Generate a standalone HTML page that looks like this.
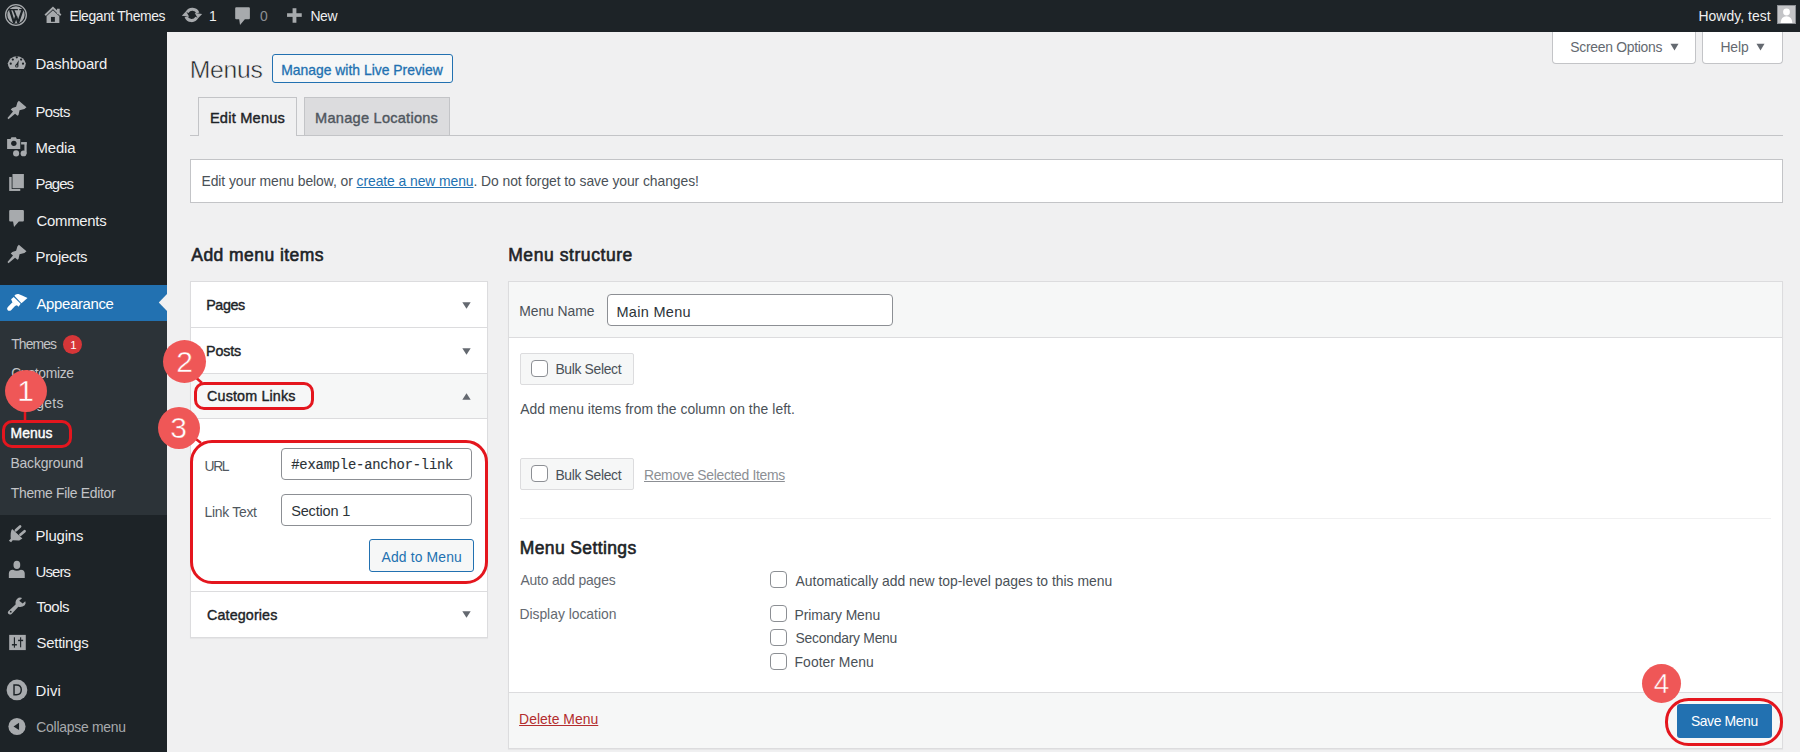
<!DOCTYPE html>
<html><head><meta charset="utf-8"><title>Menus &lsaquo; Elegant Themes &mdash; WordPress</title>
<style>
html,body{margin:0;padding:0;width:1800px;height:752px;overflow:hidden;background:#f0f0f1;font-family:'Liberation Sans',sans-serif}
.r{position:absolute}
.t{position:absolute;line-height:1;white-space:pre}
</style></head><body>
<div class="r" style="left:0px;top:0px;width:1800px;height:32px;background:#1d2327"></div>
<div class="t" style="left:69.50px;top:8px;line-height:16px;font-size:13.9px;color:#f0f0f1;font-family:'Liberation Sans', sans-serif;font-weight:400;letter-spacing:-0.377px;">Elegant Themes</div>
<div class="t" style="left:209.00px;top:8px;line-height:16px;font-size:13.9px;color:#f0f0f1;font-family:'Liberation Sans', sans-serif;font-weight:400;">1</div>
<div class="t" style="left:260.00px;top:8px;line-height:16px;font-size:13.9px;color:#8c8f94;font-family:'Liberation Sans', sans-serif;font-weight:400;">0</div>
<div class="t" style="left:310.50px;top:8px;line-height:16px;font-size:13.9px;color:#f0f0f1;font-family:'Liberation Sans', sans-serif;font-weight:400;letter-spacing:-0.428px;">New</div>
<div class="t" style="left:1698.50px;top:8px;line-height:16px;font-size:13.9px;color:#f0f0f1;font-family:'Liberation Sans', sans-serif;font-weight:400;letter-spacing:0.052px;">Howdy, test</div>
<div class="r" style="left:1777px;top:5px;width:19px;height:19px;background:#c3c4c7;box-sizing:border-box;border:1px solid #8c8f94"></div>
<svg class="r" style="left:1778px;top:6px" width="17" height="17" viewBox="0 0 17 17"><circle cx="8.5" cy="6" r="3.4" fill="#fff"/><path d="M2.6 17 Q3 10.2 8.5 10.2 Q14 10.2 14.4 17 Z" fill="#fff"/></svg>
<div class="r" style="left:0px;top:32px;width:167px;height:720px;background:#1d2327"></div>
<div class="r" style="left:0px;top:285px;width:167px;height:36px;background:#2271b1"></div>
<div class="r" style="left:0px;top:321px;width:167px;height:194px;background:#2c3338"></div>
<svg class="r" style="left:158px;top:294px" width="9" height="17" viewBox="0 0 9 17"><path d="M9 0 L0.8 8.5 L9 17 Z" fill="#f0f0f1"/></svg>
<div class="t" style="left:35.50px;top:56px;line-height:16px;font-size:14.9px;color:#f0f0f1;font-family:'Liberation Sans', sans-serif;font-weight:400;letter-spacing:-0.146px;">Dashboard</div>
<div class="t" style="left:35.50px;top:104px;line-height:16px;font-size:14.9px;color:#f0f0f1;font-family:'Liberation Sans', sans-serif;font-weight:400;letter-spacing:-0.599px;">Posts</div>
<div class="t" style="left:35.50px;top:140px;line-height:16px;font-size:14.9px;color:#f0f0f1;font-family:'Liberation Sans', sans-serif;font-weight:400;letter-spacing:-0.119px;">Media</div>
<div class="t" style="left:35.50px;top:176px;line-height:16px;font-size:14.9px;color:#f0f0f1;font-family:'Liberation Sans', sans-serif;font-weight:400;letter-spacing:-0.944px;">Pages</div>
<div class="t" style="left:36.50px;top:213px;line-height:16px;font-size:14.9px;color:#f0f0f1;font-family:'Liberation Sans', sans-serif;font-weight:400;letter-spacing:-0.263px;">Comments</div>
<div class="t" style="left:35.50px;top:249px;line-height:16px;font-size:14.9px;color:#f0f0f1;font-family:'Liberation Sans', sans-serif;font-weight:400;letter-spacing:-0.263px;">Projects</div>
<div class="t" style="left:36.50px;top:296px;line-height:16px;font-size:14.9px;color:#fff;font-family:'Liberation Sans', sans-serif;font-weight:400;letter-spacing:-0.336px;">Appearance</div>
<div class="t" style="left:35.50px;top:528px;line-height:16px;font-size:14.9px;color:#f0f0f1;font-family:'Liberation Sans', sans-serif;font-weight:400;letter-spacing:-0.149px;">Plugins</div>
<div class="t" style="left:35.50px;top:564px;line-height:16px;font-size:14.9px;color:#f0f0f1;font-family:'Liberation Sans', sans-serif;font-weight:400;letter-spacing:-0.860px;">Users</div>
<div class="t" style="left:36.50px;top:599px;line-height:16px;font-size:14.9px;color:#f0f0f1;font-family:'Liberation Sans', sans-serif;font-weight:400;letter-spacing:-0.429px;">Tools</div>
<div class="t" style="left:36.50px;top:635px;line-height:16px;font-size:14.9px;color:#f0f0f1;font-family:'Liberation Sans', sans-serif;font-weight:400;letter-spacing:-0.237px;">Settings</div>
<div class="t" style="left:35.50px;top:683px;line-height:16px;font-size:14.9px;color:#f0f0f1;font-family:'Liberation Sans', sans-serif;font-weight:400;letter-spacing:0.164px;">Divi</div>
<div class="t" style="left:36.30px;top:719px;line-height:16px;font-size:13.9px;color:#a7aaad;font-family:'Liberation Sans', sans-serif;font-weight:400;letter-spacing:-0.244px;">Collapse menu</div>
<div class="t" style="left:11.20px;top:336px;line-height:16px;font-size:13.9px;color:#c3c4c7;font-family:'Liberation Sans', sans-serif;font-weight:400;letter-spacing:-0.886px;">Themes</div>
<div class="r" style="left:63px;top:335px;width:19px;height:19px;background:#d63638;border-radius:50%"></div>
<div class="t" style="left:70.20px;top:339px;line-height:12px;font-size:11.5px;color:#fff;font-family:'Liberation Sans', sans-serif;font-weight:400;">1</div>
<div class="t" style="left:11.20px;top:365px;line-height:16px;font-size:13.9px;color:#c3c4c7;font-family:'Liberation Sans', sans-serif;font-weight:400;letter-spacing:-0.349px;">Customize</div>
<div class="t" style="left:11.20px;top:395px;line-height:16px;font-size:13.9px;color:#c3c4c7;font-family:'Liberation Sans', sans-serif;font-weight:400;letter-spacing:0.345px;">Widgets</div>
<div class="t" style="left:10.60px;top:425px;line-height:16px;font-size:13.9px;color:#fff;font-family:'Liberation Sans', sans-serif;font-weight:400;letter-spacing:0.013px;-webkit-text-stroke:0.4px #fff;">Menus</div>
<div class="t" style="left:10.40px;top:455px;line-height:16px;font-size:13.9px;color:#c3c4c7;font-family:'Liberation Sans', sans-serif;font-weight:400;letter-spacing:-0.134px;">Background</div>
<div class="t" style="left:10.80px;top:485px;line-height:16px;font-size:13.9px;color:#c3c4c7;font-family:'Liberation Sans', sans-serif;font-weight:400;letter-spacing:-0.306px;">Theme File Editor</div>
<svg class="r" style="left:3px;top:2px" width="26" height="26" viewBox="0 0 752 752"><circle cx="375" cy="375" r="300" fill="none" stroke="#a7aaad" stroke-width="38"/><circle cx="375" cy="375" r="250" fill="#a7aaad"/><path d="M205 235 L318 595 L378 415 L440 595 L560 235" fill="none" stroke="#1d2327" stroke-width="62" stroke-linejoin="bevel"/><path d="M160 222 H300 M300 222 H430 M470 222 H590" stroke="#1d2327" stroke-width="34"/><path d="M300 222 L388 450" stroke="#1d2327" stroke-width="50"/></svg>
<svg class="r" style="left:40px;top:2px" width="26" height="26" viewBox="0 0 752 752"><path d="M150 385 L375 170 L600 385" fill="none" stroke="#a7aaad" stroke-width="58"/><rect x="492" y="195" width="78" height="150" fill="#a7aaad"/><path d="M190 410 L375 240 L560 410 V610 H190 Z" fill="#a7aaad"/><rect x="318" y="432" width="112" height="140" fill="#1d2327"/></svg>
<svg class="r" style="left:179px;top:2px" width="26" height="26" viewBox="0 0 752 752"><path d="M235 300 A170 170 0 0 1 545 320" fill="none" stroke="#a7aaad" stroke-width="92"/><path d="M455 320 L670 350 L545 480 Z" fill="#a7aaad"/><path d="M515 445 A170 170 0 0 1 205 425" fill="none" stroke="#a7aaad" stroke-width="92"/><path d="M295 425 L80 395 L205 270 Z" fill="#a7aaad"/></svg>
<svg class="r" style="left:230px;top:2px" width="26" height="26" viewBox="0 0 752 752"><path d="M180 150 H545 Q575 150 575 180 V470 Q575 500 545 500 H430 L290 665 L265 500 H180 Q150 500 150 470 V180 Q150 150 180 150 Z" fill="#a7aaad"/></svg>
<svg class="r" style="left:281px;top:2px" width="26" height="26" viewBox="0 0 752 752"><rect x="335" y="180" width="110" height="420" fill="#a7aaad"/><rect x="175" y="325" width="425" height="105" fill="#a7aaad"/></svg>
<svg class="r" style="left:4px;top:49px" width="26" height="26" viewBox="0 0 752 752"><path d="M170 580 Q110 500 110 410 A265 245 0 0 1 630 410 Q630 500 575 580 Z" fill="#a7aaad"/><circle cx="370" cy="240" r="32" fill="#1d2327"/><circle cx="255" cy="305" r="32" fill="#1d2327"/><circle cx="495" cy="305" r="32" fill="#1d2327"/><circle cx="195" cy="425" r="32" fill="#1d2327"/><circle cx="550" cy="425" r="32" fill="#1d2327"/><path d="M335 470 L430 320 L410 500 Z" fill="#1d2327"/><circle cx="370" cy="490" r="48" fill="#1d2327"/><circle cx="370" cy="490" r="20" fill="#a7aaad"/></svg>
<svg class="r" style="left:4px;top:97px" width="26" height="26" viewBox="0 0 752 752"><path d="M430 110 L650 300 L590 345 L450 385 L420 520 L390 545 L320 485 L130 640 L100 610 L260 420 L195 360 L240 315 L350 285 L390 150 Z" fill="#a7aaad"/></svg>
<svg class="r" style="left:4px;top:241px" width="26" height="26" viewBox="0 0 752 752"><path d="M430 110 L650 300 L590 345 L450 385 L420 520 L390 545 L320 485 L130 640 L100 610 L260 420 L195 360 L240 315 L350 285 L390 150 Z" fill="#a7aaad"/></svg>
<svg class="r" style="left:4px;top:133px" width="26" height="26" viewBox="0 0 752 752"><path d="M90 175 H190 L215 120 H345 L370 175 H470 V460 H90 Z" fill="#a7aaad"/><circle cx="285" cy="300" r="78" fill="#1d2327"/><rect x="495" y="262" width="160" height="70" fill="#a7aaad"/><rect x="590" y="262" width="65" height="340" fill="#a7aaad"/><circle cx="565" cy="590" r="85" fill="#a7aaad"/><circle cx="350" cy="590" r="88" fill="#a7aaad"/></svg>
<svg class="r" style="left:4px;top:169px" width="26" height="26" viewBox="0 0 752 752"><rect x="150" y="230" width="320" height="405" fill="#a7aaad"/><rect x="222" y="125" width="373" height="452" fill="#1d2327"/><rect x="245" y="145" width="330" height="410" fill="#a7aaad"/></svg>
<svg class="r" style="left:4px;top:205px" width="26" height="26" viewBox="0 0 752 752"><path d="M180 145 H545 Q575 145 575 175 V450 Q575 480 545 480 H430 L290 635 L262 480 H180 Q150 480 150 450 V175 Q150 145 180 145 Z" fill="#a7aaad"/></svg>
<svg class="r" style="left:4px;top:289px" width="26" height="26" viewBox="0 0 752 752"><path d="M300 195 Q330 140 420 148 Q530 185 680 262 Q600 335 505 410 Z" fill="#fff"/><path d="M205 300 L282 232 L482 428 L420 512 L375 470 L330 482 L250 395 Z" fill="#fff"/><path d="M245 380 L340 470 L205 612 Q150 655 100 605 Q70 560 118 515 Z" fill="#fff"/></svg>
<svg class="r" style="left:4px;top:521px" width="26" height="26" viewBox="0 0 752 752"><path d="M235 228 L532 505 L440 562 L252 556 L205 615 L140 568 L196 515 Q180 300 235 228 Z" fill="#a7aaad"/><path d="M345 270 L465 160 M475 400 L595 295" stroke="#a7aaad" stroke-width="78" stroke-linecap="round"/></svg>
<svg class="r" style="left:4px;top:557px" width="26" height="26" viewBox="0 0 752 752"><ellipse cx="372" cy="230" rx="98" ry="118" fill="#a7aaad"/><path d="M140 610 V480 Q140 370 260 370 Q372 430 485 370 Q600 370 600 480 V610 Z" fill="#a7aaad"/></svg>
<svg class="r" style="left:4px;top:593px" width="26" height="26" viewBox="0 0 752 752"><path d="M125 525 L335 335 Q315 200 420 140 Q470 118 525 148 L440 225 L540 305 L615 235 Q645 290 600 355 Q520 425 415 400 L220 605 Q160 645 118 590 Q98 550 125 525 Z" fill="#a7aaad"/><circle cx="195" cy="540" r="26" fill="#1d2327"/></svg>
<svg class="r" style="left:4px;top:629px" width="26" height="26" viewBox="0 0 752 752"><rect x="150" y="170" width="480" height="440" fill="#a7aaad"/><rect x="285" y="240" width="32" height="300" fill="#1d2327"/><rect x="228" y="435" width="145" height="42" fill="#1d2327"/><rect x="465" y="240" width="32" height="290" fill="#1d2327"/><rect x="408" y="310" width="145" height="42" fill="#1d2327"/></svg>
<svg class="r" style="left:4px;top:677px" width="26" height="26" viewBox="0 0 752 752"><circle cx="375" cy="375" r="300" fill="#a7aaad"/><path d="M290 230 H360 Q500 230 500 372 Q500 515 360 515 H290 Z" fill="none" stroke="#1d2327" stroke-width="42"/></svg>
<svg class="r" style="left:4px;top:713px" width="26" height="26" viewBox="0 0 752 752"><circle cx="375" cy="390" r="248" fill="#a7aaad"/><path d="M275 390 L435 285 V495 Z" fill="#1d2327"/></svg>
<div class="r" style="left:167px;top:32px;width:1633px;height:720px;background:#f0f0f1"></div>
<div class="r" style="left:1552px;top:32px;width:144px;height:32px;background:#fff;box-sizing:border-box;border:1px solid #c3c4c7;border-top:0;border-radius:0 0 4px 4px"></div>
<div class="t" style="left:1570.30px;top:39px;line-height:16px;font-size:13.9px;color:#646970;font-family:'Liberation Sans', sans-serif;font-weight:400;letter-spacing:-0.284px;">Screen Options</div>
<svg class="r" style="left:1670px;top:43px" width="9" height="8" viewBox="0 0 9 8"><path d="M0.5 0.8 H8.5 L4.5 7.4 Z" fill="#646970"/></svg>
<div class="r" style="left:1702px;top:32px;width:81px;height:32px;background:#fff;box-sizing:border-box;border:1px solid #c3c4c7;border-top:0;border-radius:0 0 4px 4px"></div>
<div class="t" style="left:1720.40px;top:39px;line-height:16px;font-size:13.9px;color:#646970;font-family:'Liberation Sans', sans-serif;font-weight:400;letter-spacing:-0.114px;">Help</div>
<svg class="r" style="left:1756px;top:43px" width="9" height="8" viewBox="0 0 9 8"><path d="M0.5 0.8 H8.5 L4.5 7.4 Z" fill="#646970"/></svg>
<div class="t" style="left:189.70px;top:56px;line-height:27px;font-size:24.7px;color:#1d2327;font-family:'Liberation Sans', sans-serif;font-weight:400;letter-spacing:-0.264px;-webkit-text-stroke:0.5px #f0f0f1;">Menus</div>
<div class="r" style="left:272px;top:54px;width:181px;height:29px;background:#f6f7f7;box-sizing:border-box;border:1px solid #2271b1;border-radius:3px"></div>
<div class="t" style="left:281.25px;top:62px;line-height:16px;font-size:13.9px;color:#2271b1;font-family:'Liberation Sans', sans-serif;font-weight:400;letter-spacing:0.003px;-webkit-text-stroke:0.3px #2271b1;">Manage with Live Preview</div>
<div class="r" style="left:190px;top:135px;width:1593px;height:1px;background:#c3c4c7"></div>
<div class="r" style="left:198px;top:97px;width:99px;height:39px;background:#f0f0f1;box-sizing:border-box;border:1px solid #c3c4c7;border-bottom:0"></div>
<div class="t" style="left:209.90px;top:110px;line-height:16px;font-size:14.6px;color:#1d2327;font-family:'Liberation Sans', sans-serif;font-weight:400;letter-spacing:0.221px;-webkit-text-stroke:0.4px #1d2327;">Edit Menus</div>
<div class="r" style="left:304px;top:97px;width:146px;height:38px;background:#dcdcde;box-sizing:border-box;border:1px solid #c3c4c7;border-bottom:0"></div>
<div class="t" style="left:315.10px;top:110px;line-height:16px;font-size:14.6px;color:#50575e;font-family:'Liberation Sans', sans-serif;font-weight:400;letter-spacing:0.235px;-webkit-text-stroke:0.4px #50575e;">Manage Locations</div>
<div class="r" style="left:190px;top:159px;width:1593px;height:44px;background:#fff;box-sizing:border-box;border:1px solid #c3c4c7"></div>
<div class="t" style="left:201.50px;top:173px;line-height:16px;font-size:13.9px;color:#4a5157;font-family:'Liberation Sans', sans-serif;font-weight:400;letter-spacing:-0.068px;">Edit your menu below, or <span style="color:#2271b1;text-decoration:underline">create a new menu</span>. Do not forget to save your changes!</div>
<div class="t" style="left:191.30px;top:245px;line-height:20px;font-size:17.5px;color:#1d2327;font-family:'Liberation Sans', sans-serif;font-weight:400;letter-spacing:0.439px;-webkit-text-stroke:0.6px #1d2327;">Add menu items</div>
<div class="r" style="left:190px;top:281px;width:298px;height:357px;background:#fff;box-sizing:border-box;border:1px solid #dcdcde;box-shadow:0 1px 1px rgba(0,0,0,.04)"></div>
<div class="r" style="left:191px;top:327px;width:296px;height:1px;background:#dcdcde"></div>
<div class="r" style="left:191px;top:373px;width:296px;height:46px;background:#f6f7f7"></div>
<div class="r" style="left:191px;top:373px;width:296px;height:1px;background:#dcdcde"></div>
<div class="r" style="left:191px;top:418px;width:296px;height:1px;background:#dcdcde"></div>
<div class="r" style="left:191px;top:591px;width:296px;height:1px;background:#dcdcde"></div>
<div class="t" style="left:206.20px;top:297px;line-height:16px;font-size:14.3px;color:#1d2327;font-family:'Liberation Sans', sans-serif;font-weight:400;letter-spacing:-0.397px;-webkit-text-stroke:0.4px #1d2327;">Pages</div>
<div class="t" style="left:206.10px;top:343px;line-height:16px;font-size:14.3px;color:#1d2327;font-family:'Liberation Sans', sans-serif;font-weight:400;letter-spacing:-0.177px;-webkit-text-stroke:0.4px #1d2327;">Posts</div>
<div class="t" style="left:207.10px;top:388px;line-height:16px;font-size:14.3px;color:#1d2327;font-family:'Liberation Sans', sans-serif;font-weight:400;letter-spacing:0.158px;-webkit-text-stroke:0.4px #1d2327;">Custom Links</div>
<div class="t" style="left:207.10px;top:607px;line-height:16px;font-size:14.3px;color:#1d2327;font-family:'Liberation Sans', sans-serif;font-weight:400;letter-spacing:0.123px;-webkit-text-stroke:0.4px #1d2327;">Categories</div>
<svg class="r" style="left:462px;top:302px" width="9" height="7" viewBox="0 0 9 7"><path d="M0.3 0.3 H8.7 L4.5 6.8 Z" fill="#646970"/></svg>
<svg class="r" style="left:462px;top:348px" width="9" height="7" viewBox="0 0 9 7"><path d="M0.3 0.3 H8.7 L4.5 6.8 Z" fill="#646970"/></svg>
<svg class="r" style="left:462px;top:393px" width="9" height="7" viewBox="0 0 9 7"><path d="M0.3 6.7 H8.7 L4.5 0.2 Z" fill="#646970"/></svg>
<svg class="r" style="left:462px;top:611px" width="9" height="7" viewBox="0 0 9 7"><path d="M0.3 0.3 H8.7 L4.5 6.8 Z" fill="#646970"/></svg>
<div class="t" style="left:204.60px;top:458px;line-height:16px;font-size:13.9px;color:#50575e;font-family:'Liberation Sans', sans-serif;font-weight:400;letter-spacing:-1.481px;">URL</div>
<div class="t" style="left:204.60px;top:504px;line-height:16px;font-size:13.9px;color:#50575e;font-family:'Liberation Sans', sans-serif;font-weight:400;letter-spacing:-0.282px;">Link Text</div>
<div class="r" style="left:281px;top:448px;width:191px;height:32px;background:#fff;box-sizing:border-box;border:1px solid #8c8f94;border-radius:4px"></div>
<div class="t" style="left:291.27px;top:458px;line-height:15px;font-size:13.8px;color:#2c3338;font-family:'Liberation Mono', monospace;font-weight:400;letter-spacing:-0.182px;-webkit-text-stroke:0.15px #2c3338;">#example-anchor-link</div>
<div class="r" style="left:281px;top:494px;width:191px;height:32px;background:#fff;box-sizing:border-box;border:1px solid #8c8f94;border-radius:4px"></div>
<div class="t" style="left:291.20px;top:503px;line-height:16px;font-size:14.5px;color:#2c3338;font-family:'Liberation Sans', sans-serif;font-weight:400;letter-spacing:-0.174px;">Section 1</div>
<div class="r" style="left:369px;top:539px;width:105px;height:33px;background:#f6f7f7;box-sizing:border-box;border:1px solid #2271b1;border-radius:3px"></div>
<div class="t" style="left:381.50px;top:549px;line-height:16px;font-size:13.9px;color:#2271b1;font-family:'Liberation Sans', sans-serif;font-weight:400;letter-spacing:0.156px;">Add to Menu</div>
<div class="t" style="left:508.20px;top:245px;line-height:20px;font-size:17.5px;color:#1d2327;font-family:'Liberation Sans', sans-serif;font-weight:400;letter-spacing:0.571px;-webkit-text-stroke:0.6px #1d2327;">Menu structure</div>
<div class="r" style="left:508px;top:281px;width:1275px;height:468px;background:#fff;box-sizing:border-box;border:1px solid #dcdcde;box-shadow:0 1px 1px rgba(0,0,0,.04)"></div>
<div class="r" style="left:509px;top:282px;width:1273px;height:55px;background:#f6f7f7"></div>
<div class="r" style="left:509px;top:337px;width:1273px;height:1px;background:#dcdcde"></div>
<div class="t" style="left:519.20px;top:303px;line-height:16px;font-size:13.9px;color:#4a5157;font-family:'Liberation Sans', sans-serif;font-weight:400;letter-spacing:-0.054px;">Menu Name</div>
<div class="r" style="left:607px;top:294px;width:286px;height:32px;background:#fff;box-sizing:border-box;border:1px solid #8c8f94;border-radius:4px"></div>
<div class="t" style="left:616.50px;top:304px;line-height:16px;font-size:14.5px;color:#2c3338;font-family:'Liberation Sans', sans-serif;font-weight:400;letter-spacing:0.292px;">Main Menu</div>
<div class="r" style="left:520px;top:353px;width:114px;height:32px;background:#f6f7f7;box-sizing:border-box;border:1px solid #dcdcde;border-radius:2px"></div>
<div class="r" style="left:531px;top:360px;width:17px;height:17px;background:#fff;box-sizing:border-box;border:1px solid #8c8f94;border-radius:4px"></div>
<div class="t" style="left:555.40px;top:361px;line-height:16px;font-size:13.9px;color:#4a5157;font-family:'Liberation Sans', sans-serif;font-weight:400;letter-spacing:-0.333px;">Bulk Select</div>
<div class="t" style="left:520.20px;top:401px;line-height:16px;font-size:13.9px;color:#4a5157;font-family:'Liberation Sans', sans-serif;font-weight:400;letter-spacing:0.050px;">Add menu items from the column on the left.</div>
<div class="r" style="left:520px;top:458px;width:114px;height:32px;background:#f6f7f7;box-sizing:border-box;border:1px solid #dcdcde;border-radius:2px"></div>
<div class="r" style="left:531px;top:465px;width:17px;height:17px;background:#fff;box-sizing:border-box;border:1px solid #8c8f94;border-radius:4px"></div>
<div class="t" style="left:555.40px;top:467px;line-height:16px;font-size:13.9px;color:#4a5157;font-family:'Liberation Sans', sans-serif;font-weight:400;letter-spacing:-0.333px;">Bulk Select</div>
<div class="t" style="left:644.00px;top:467px;line-height:16px;font-size:13.9px;color:#8c8f94;font-family:'Liberation Sans', sans-serif;font-weight:400;letter-spacing:-0.316px;"><span style="text-decoration:underline">Remove Selected Items</span></div>
<div class="r" style="left:520px;top:518px;width:1251px;height:1px;background:#f0f0f1"></div>
<div class="t" style="left:519.70px;top:538px;line-height:20px;font-size:17.5px;color:#1d2327;font-family:'Liberation Sans', sans-serif;font-weight:400;letter-spacing:0.382px;-webkit-text-stroke:0.6px #1d2327;">Menu Settings</div>
<div class="t" style="left:520.40px;top:572px;line-height:16px;font-size:13.9px;color:#646970;font-family:'Liberation Sans', sans-serif;font-weight:400;letter-spacing:-0.159px;">Auto add pages</div>
<div class="t" style="left:519.40px;top:606px;line-height:16px;font-size:13.9px;color:#646970;font-family:'Liberation Sans', sans-serif;font-weight:400;letter-spacing:-0.017px;">Display location</div>
<div class="r" style="left:770px;top:571px;width:17px;height:17px;background:#fff;box-sizing:border-box;border:1px solid #8c8f94;border-radius:4px"></div>
<div class="t" style="left:795.60px;top:573px;line-height:16px;font-size:13.9px;color:#4a5157;font-family:'Liberation Sans', sans-serif;font-weight:400;letter-spacing:-0.001px;">Automatically add new top-level pages to this menu</div>
<div class="r" style="left:770px;top:605px;width:17px;height:17px;background:#fff;box-sizing:border-box;border:1px solid #8c8f94;border-radius:4px"></div>
<div class="t" style="left:794.60px;top:607px;line-height:16px;font-size:13.9px;color:#4a5157;font-family:'Liberation Sans', sans-serif;font-weight:400;letter-spacing:-0.084px;">Primary Menu</div>
<div class="r" style="left:770px;top:629px;width:17px;height:17px;background:#fff;box-sizing:border-box;border:1px solid #8c8f94;border-radius:4px"></div>
<div class="t" style="left:795.60px;top:630px;line-height:16px;font-size:13.9px;color:#4a5157;font-family:'Liberation Sans', sans-serif;font-weight:400;letter-spacing:-0.253px;">Secondary Menu</div>
<div class="r" style="left:770px;top:653px;width:17px;height:17px;background:#fff;box-sizing:border-box;border:1px solid #8c8f94;border-radius:4px"></div>
<div class="t" style="left:794.60px;top:654px;line-height:16px;font-size:13.9px;color:#4a5157;font-family:'Liberation Sans', sans-serif;font-weight:400;letter-spacing:0.037px;">Footer Menu</div>
<div class="r" style="left:509px;top:692px;width:1273px;height:56px;background:#f6f7f7"></div>
<div class="r" style="left:509px;top:692px;width:1273px;height:1px;background:#dcdcde"></div>
<div class="t" style="left:519.10px;top:711px;line-height:16px;font-size:13.9px;color:#b32d2e;font-family:'Liberation Sans', sans-serif;font-weight:400;letter-spacing:0.037px;"><span style="text-decoration:underline">Delete Menu</span></div>
<div class="r" style="left:1677px;top:704px;width:95px;height:34px;background:#2271b1;border-radius:3px"></div>
<div class="t" style="left:1690.90px;top:713px;line-height:16px;font-size:13.9px;color:#fff;font-family:'Liberation Sans', sans-serif;font-weight:400;letter-spacing:-0.380px;">Save Menu</div>
<div class="r" style="left:1.5px;top:420px;width:70.5px;height:27.5px;box-sizing:border-box;border:3px solid #e4161e;border-radius:10px"></div>
<svg class="r" style="left:0px;top:0px" width="1800" height="752" viewBox="0 0 1800 752"><line x1="25" y1="411" x2="25" y2="421" stroke="#e4161e" stroke-width="2.5"/></svg>
<div class="r" style="left:4.5px;top:370.0px;width:42px;height:42px;background:#ef5757;border-radius:50%"></div>
<div class="t" style="left:4.5px;top:370.0px;width:42px;height:42px;line-height:42px;text-align:center;font-size:30px;color:#fff;font-family:'Liberation Sans', sans-serif;-webkit-text-stroke:0.45px #ef5757">1</div>
<div class="r" style="left:194px;top:382px;width:120px;height:28px;box-sizing:border-box;border:3px solid #e4161e;border-radius:10px"></div>
<svg class="r" style="left:0px;top:0px" width="1800" height="752" viewBox="0 0 1800 752"><line x1="193" y1="375" x2="202" y2="383" stroke="#e4161e" stroke-width="2.5"/></svg>
<div class="r" style="left:163.2px;top:340.0px;width:43px;height:43px;background:#ef5757;border-radius:50%"></div>
<div class="t" style="left:163.2px;top:340.0px;width:43px;height:43px;line-height:43px;text-align:center;font-size:30px;color:#fff;font-family:'Liberation Sans', sans-serif;-webkit-text-stroke:0.45px #ef5757">2</div>
<div class="r" style="left:189.5px;top:439.5px;width:298px;height:144px;box-sizing:border-box;border:3px solid #e4161e;border-radius:22px"></div>
<svg class="r" style="left:0px;top:0px" width="1800" height="752" viewBox="0 0 1800 752"><line x1="192" y1="436" x2="201" y2="443" stroke="#e4161e" stroke-width="2.5"/></svg>
<div class="r" style="left:157.5px;top:406.6px;width:42px;height:42px;background:#ef5757;border-radius:50%"></div>
<div class="t" style="left:157.5px;top:406.6px;width:42px;height:42px;line-height:42px;text-align:center;font-size:30px;color:#fff;font-family:'Liberation Sans', sans-serif;-webkit-text-stroke:0.45px #ef5757">3</div>
<div class="r" style="left:1665px;top:698px;width:118px;height:47.5px;box-sizing:border-box;border:3px solid #e4161e;border-radius:23.5px"></div>
<div class="r" style="left:1642.1px;top:663.9px;width:39px;height:39px;background:#ef5757;border-radius:50%"></div>
<div class="t" style="left:1642.1px;top:663.9px;width:39px;height:39px;line-height:39px;text-align:center;font-size:28px;color:#fff;font-family:'Liberation Sans', sans-serif;-webkit-text-stroke:0.45px #ef5757">4</div>
</body></html>
